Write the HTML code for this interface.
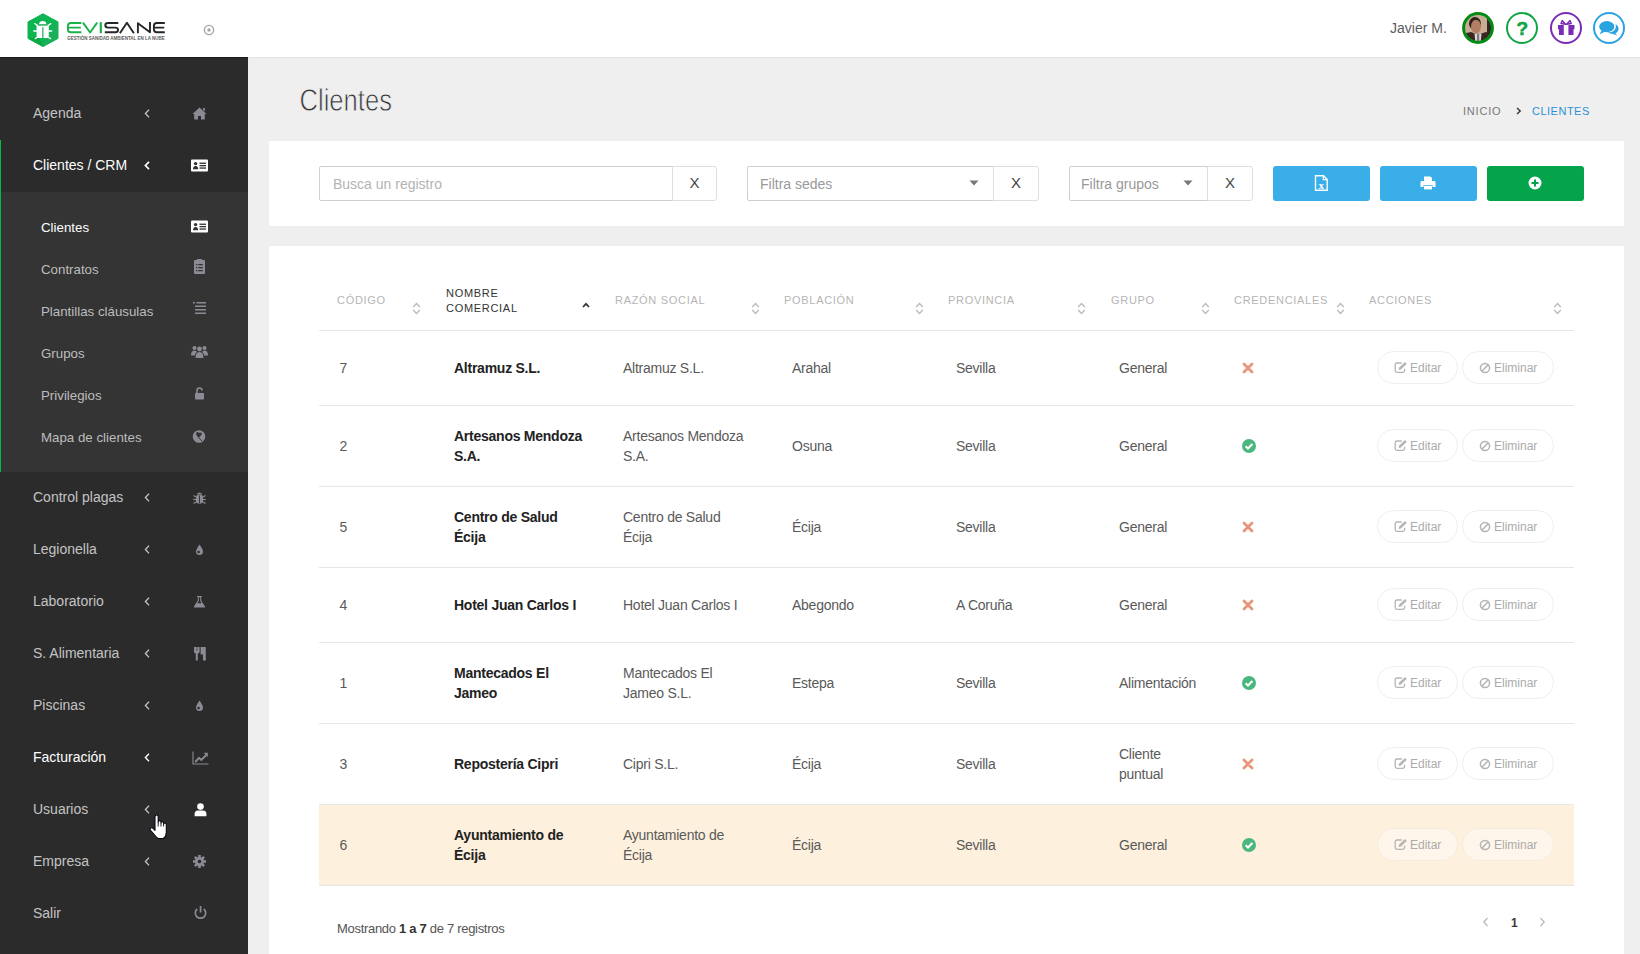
<!DOCTYPE html>
<html><head><meta charset="utf-8">
<style>
*{margin:0;padding:0;box-sizing:border-box}
html,body{width:1640px;height:954px;overflow:hidden;background:#efefef;font-family:"Liberation Sans",sans-serif}
.a{position:absolute}
#hdr{position:absolute;left:0;top:0;width:1640px;height:57px;background:#fff}
#side{position:absolute;left:0;top:57px;width:248px;height:897px;background:#2b2b2b}
.mi{position:absolute;left:0;width:248px;height:52px;color:#c4c4c4;font-size:14px}
.mi .t{position:absolute;left:33px;top:17px;line-height:16px;white-space:nowrap}
.mi .ch{position:absolute;left:144px;top:21px;width:6px;height:9px}
.mi .ic{position:absolute;left:191px;top:17px;width:17px;height:17px}
.si{position:absolute;left:0;width:248px;height:42px;color:#bdbdbd;font-size:13.3px}
.si .t{position:absolute;left:41px;top:13.6px;line-height:16px;white-space:nowrap}
.si .ic{position:absolute;left:191px;top:12px;width:17px;height:17px}
.th{position:absolute;font-size:11px;line-height:15px;letter-spacing:.7px;color:#b5b5b5;white-space:nowrap}
.td{position:absolute;font-size:14px;line-height:20px;letter-spacing:-.25px;color:#5a5a5a;white-space:nowrap}
.td.b{font-weight:bold;color:#222}
.btn{position:absolute;height:33px;border:1px solid #efefef;border-radius:17px;font-size:12px;line-height:14px;color:#ababab;white-space:nowrap}
</style></head><body>
<div id="hdr">
  <!-- logo -->
  <svg class="a" style="left:27px;top:13px" width="32" height="34" viewBox="0 0 32 34">
    <polygon points="16,0.8 31,8.9 31,25.4 16,33.6 1,25.4 1,8.9" fill="#0db552" stroke="#0db552" stroke-width="1" stroke-linejoin="round"/>
    <polygon points="31,8.9 31,25.4 16,33.6 18,20" fill="#21ad5c" opacity=".7"/>
    <polygon points="1,25.4 16,33.6 12,24" fill="#069a3a" opacity=".5"/>
    <g fill="#fff">
      <path d="M12.1 11.3 Q12.3 8 15.7 8 Q19.1 8 19.3 11.3 Z"/>
      <path d="M9.6 11.8 H21.8 V23 Q21.8 25 19.8 25 H11.6 Q9.6 25 9.6 23Z"/>
    </g>
    <g stroke="#fff" stroke-width="1.3" stroke-linecap="round">
      <path d="M10.3 12.5 L7.8 10.6"/><path d="M21.1 12.5 L23.8 10.6"/>
      <path d="M9.6 18 H6.8"/><path d="M21.8 18 H24.7"/>
      <path d="M10.3 24.2 L8.2 25.6"/><path d="M21.1 24.2 L23.6 25.6"/>
    </g>
    <rect x="15.3" y="14.2" width="1.1" height="10.8" fill="#0ea24c"/>
    <rect x="11" y="11.6" width="9.5" height="1" fill="#0a9a3e"/>
  </svg>
  <svg class="a" style="left:64px;top:18px" width="106" height="26" viewBox="0 0 106 26">
    <g fill="none" stroke-width="1.9" stroke-linejoin="round">
      <path d="M17.4 5.05 H6.8 Q3.9 5.05 3.9 8 V11.3 Q3.9 14.25 6.8 14.25 H17.4 M3.9 9.65 H16.8" stroke="#1bb04a"/>
      <path d="M19 4.6 L26.1 14.5 L33.2 4.6" stroke="#1bb04a"/>
      <path d="M36.8 4.1 V15.2" stroke="#1bb04a" stroke-width="2.2"/>
      <path d="M54.3 5.05 H44.2 Q41.3 5.05 41.3 7.35 Q41.3 9.65 44.2 9.65 H51.2 Q54 9.65 54 11.95 Q54 14.25 51.2 14.25 H40.8" stroke="#262626"/>
      <path d="M55.9 15.2 L62.9 4.8 L69.9 15.2" stroke="#262626"/>
      <path d="M73.9 15.2 V5.2 L86 14.2 V4.1" stroke="#262626"/>
      <path d="M100.8 5.05 H92.8 Q89.9 5.05 89.9 8 V11.3 Q89.9 14.25 92.8 14.25 H100.8 M89.9 9.65 H100.2" stroke="#262626"/>
    </g>
    <text x="3.2" y="21.8" textLength="97.6" lengthAdjust="spacingAndGlyphs" font-family="Liberation Sans" font-weight="bold" font-size="4.7" fill="#5a5a5a">GESTIÓN SANIDAD AMBIENTAL EN LA NUBE</text>
  </svg>
  <svg class="a" style="left:202.6px;top:23.6px" width="12" height="12" viewBox="0 0 12 12"><circle cx="6" cy="6" r="4.6" fill="none" stroke="#a4a4ac" stroke-width="1.4"/><circle cx="6" cy="6" r="1.7" fill="#a4a4ac"/></svg>
  <div class="a" style="left:1390px;top:20px;font-size:14px;line-height:17px;color:#5c5c5c;white-space:nowrap">Javier M.</div>
  <svg class="a" style="left:1462px;top:12px" width="32" height="32" viewBox="0 0 32 32">
    <defs><clipPath id="av"><circle cx="16" cy="16" r="13.2"/></clipPath></defs>
    <g clip-path="url(#av)">
      <rect width="32" height="32" fill="#c8ad93"/>
      <rect x="25" y="7" width="4" height="16" fill="#2f2624"/>
      <ellipse cx="13" cy="11.5" rx="6" ry="6.5" fill="#2d1f1a"/>
      <ellipse cx="14" cy="14.5" rx="5" ry="6.8" fill="#b27d64"/>
      <path d="M0 22 L9 20 L12.5 21.5 L19.5 21.5 L24 20 L32 22 V32 H0Z" fill="#3b2520"/>
      <path d="M12.5 21.5 H19.5 L18.5 32 H13.5Z" fill="#ddd6cb"/>
      <rect x="15" y="22" width="2.2" height="10" fill="#7a7890"/>
    </g>
    <circle cx="16" cy="16" r="14.4" fill="none" stroke="#038a14" stroke-width="3"/>
  </svg>
  <svg class="a" style="left:1505px;top:11px" width="34" height="34" viewBox="0 0 34 34">
    <circle cx="17" cy="17" r="15" fill="none" stroke="#12a544" stroke-width="2"/>
    <text x="17.3" y="24" text-anchor="middle" font-family="Liberation Sans" font-weight="bold" font-size="19" fill="#12a544" stroke="#12a544" stroke-width=".6">?</text>
  </svg>
  <svg class="a" style="left:1549px;top:11px" width="34" height="34" viewBox="0 0 34 34">
    <circle cx="17" cy="17" r="15" fill="none" stroke="#7a2db4" stroke-width="2"/>
    <path d="M9 14 H25.5 V18.2 H24.5 V24 H10 V18.2 H9Z" fill="#7a2db4"/>
    <rect x="14.8" y="14" width="4.6" height="10" fill="#fff"/>
    <rect x="15.6" y="14" width="3" height="10" fill="#7a2db4" opacity="0"/>
    <path d="M16.6 13.2 L13.2 9.6 L12 12.6Z M17.6 13.2 L21 9.6 L22.2 12.6Z" fill="none" stroke="#7a2db4" stroke-width="1.5" stroke-linejoin="round"/>
  </svg>
  <svg class="a" style="left:1592px;top:11px" width="34" height="34" viewBox="0 0 34 34">
    <circle cx="17" cy="17" r="15" fill="none" stroke="#2ba3e0" stroke-width="2"/>
    <ellipse cx="14.8" cy="15.6" rx="7.6" ry="5.6" fill="#2ba3e0"/>
    <path d="M9.5 19.5 L7.6 23.2 L13.5 20.5Z" fill="#2ba3e0"/>
    <path d="M23.6 13 Q27.6 15.6 26.3 19.6 Q25.5 21.5 23.3 22.3 L25.3 24.6 L20 22.8 Q17.3 22.6 15.6 21.6 Q21 21.4 23 18.6 Q24.6 16.2 23.6 13Z" fill="#2ba3e0"/>
  </svg>
  <div class="a" style="left:249px;top:57px;width:1391px;height:1px;background:#e4e4e4"></div>
</div>
<div id="side">
  <div class="a" style="left:0;top:0;width:248px;height:1px;background:#1c1c1c"></div>
  <!-- main menu -->
  <div class="mi" style="top:31px"><span class="t">Agenda</span>
    <svg class="ch" viewBox="0 0 6 9"><path d="M5 .8 L1.4 4.5 L5 8.2" fill="none" stroke="#c4c4c4" stroke-width="1.25"/></svg>
    <svg class="ic" viewBox="0 0 17 17"><path d="M8.5 2.5 L1.5 9 L3.2 9 L3.2 14.5 L7 14.5 L7 11 L10 11 L10 14.5 L13.8 14.5 L13.8 9 L15.5 9Z M12 3 H13.8 V6.5 L12 5Z" fill="#8b8b93"/></svg>
  </div>
  <div class="mi" style="top:83px;color:#fff"><span class="t">Clientes / CRM</span>
    <svg class="ch" viewBox="0 0 6 9"><path d="M5 .8 L1.4 4.5 L5 8.2" fill="none" stroke="#fff" stroke-width="1.7"/></svg>
    <svg class="ic" viewBox="0 0 17 17"><rect x="0" y="2.5" width="17" height="12" rx="1" fill="#fff"/><circle cx="4.6" cy="6.6" r="1.7" fill="#2b2b2b"/><path d="M2 12.3 Q2.2 9 4.6 9 Q7 9 7.2 12.3Z" fill="#2b2b2b"/><rect x="8.5" y="5.6" width="6.5" height="1.3" fill="#2b2b2b"/><rect x="8.5" y="8" width="6.5" height="1.3" fill="#2b2b2b"/><rect x="8.5" y="10.4" width="6.5" height="1.3" fill="#2b2b2b"/></svg>
  </div>
  <div class="a" style="left:0;top:83px;width:1px;height:332px;background:#02b94a"></div>
  <!-- submenu -->
  <div class="a" style="left:1px;top:135px;width:247px;height:280px;background:#343434"></div>
  <div class="si" style="top:149px;color:#fff"><span class="t">Clientes</span>
    <svg class="ic" viewBox="0 0 17 17"><rect x="0" y="2.5" width="17" height="12" rx="1" fill="#fff"/><circle cx="4.6" cy="6.6" r="1.7" fill="#343434"/><path d="M2 12.3 Q2.2 9 4.6 9 Q7 9 7.2 12.3Z" fill="#343434"/><rect x="8.5" y="5.6" width="6.5" height="1.3" fill="#343434"/><rect x="8.5" y="8" width="6.5" height="1.3" fill="#343434"/><rect x="8.5" y="10.4" width="6.5" height="1.3" fill="#343434"/></svg>
  </div>
  <div class="si" style="top:191px"><span class="t">Contratos</span>
    <svg class="ic" style="top:9.5px" viewBox="0 0 17 17"><rect x="3" y="2" width="11" height="14" rx="1" fill="#8b8b93"/><rect x="6" y="1" width="5" height="2.5" fill="#8b8b93"/><rect x="5" y="6" width="1.3" height="1.3" fill="#343434"/><rect x="7.3" y="6" width="4.5" height="1.3" fill="#343434"/><rect x="5" y="9" width="1.3" height="1.3" fill="#343434"/><rect x="7.3" y="9" width="4.5" height="1.3" fill="#343434"/><rect x="5" y="12" width="1.3" height="1.3" fill="#343434"/><rect x="7.3" y="12" width="4.5" height="1.3" fill="#343434"/></svg>
  </div>
  <div class="si" style="top:233px"><span class="t">Plantillas cláusulas</span>
    <svg class="ic" style="top:10px" viewBox="0 0 17 17"><g fill="#8b8b93"><rect x="2" y="2" width="2" height="1.5"/><rect x="5.5" y="2" width="9.5" height="1.5"/><rect x="4" y="5.5" width="11" height="1.5"/><rect x="4" y="9" width="11" height="1.5"/><rect x="4" y="12.5" width="11" height="1.5"/></g></svg>
  </div>
  <div class="si" style="top:275px"><span class="t">Grupos</span>
    <svg class="ic" style="top:11px" viewBox="0 0 17 17"><g fill="#8b8b93"><circle cx="8.5" cy="6" r="2.4"/><circle cx="3.5" cy="5" r="2"/><circle cx="13.5" cy="5" r="2"/><path d="M4.5 15 Q4.5 9 8.5 9 Q12.5 9 12.5 15Z"/><path d="M0 12.5 Q0 7.5 3.5 7.5 Q5.5 7.5 6 9 Q4 10 3.8 12.5Z"/><path d="M17 12.5 Q17 7.5 13.5 7.5 Q11.5 7.5 11 9 Q13 10 13.2 12.5Z"/></g></svg>
  </div>
  <div class="si" style="top:317px"><span class="t">Privilegios</span>
    <svg class="ic" style="top:10.5px;left:189.5px" viewBox="0 0 17 17"><g fill="#8b8b93"><rect x="5" y="8" width="9" height="6.5" rx=".8"/></g><path d="M7 8 V5.5 Q7 3 9.5 3 Q12 3 12 5.5" fill="none" stroke="#8b8b93" stroke-width="1.6"/></svg>
  </div>
  <div class="si" style="top:359px"><span class="t">Mapa de clientes</span>
    <svg class="ic" style="left:190px" viewBox="0 0 17 17"><circle cx="9" cy="8.5" r="6.3" fill="#8b8b93"/><path d="M6.5 4.3 Q8 3.6 9 5 Q10.5 3.8 11.8 5 Q12.2 7 9.3 9.2 Q8.6 9.8 8 9.6 Q7.5 8 6.5 7.5 Q6 6 6.5 4.3Z" fill="#343434"/><path d="M8.6 9.8 L12.2 13.2" stroke="#343434" stroke-width="1"/></svg>
  </div>
  <!-- rest -->
  <div class="mi" style="top:415px"><span class="t">Control plagas</span>
    <svg class="ch" viewBox="0 0 6 9"><path d="M5 .8 L1.4 4.5 L5 8.2" fill="none" stroke="#c4c4c4" stroke-width="1.25"/></svg>
    <svg class="ic" viewBox="0 0 17 17"><g fill="#8b8b93"><path d="M5.5 5.5 Q8.5 1.5 11.5 5.5Z"/><rect x="5" y="6" width="7" height="8.5" rx="2"/><g stroke="#8b8b93" stroke-width="1.2"><path d="M5 8 L2.5 6.5"/><path d="M12 8 L14.5 6.5"/><path d="M5 10.5 H2.2"/><path d="M12 10.5 H14.8"/><path d="M5 13 L2.5 14.5"/><path d="M12 13 L14.5 14.5"/></g></g><rect x="8.1" y="6.5" width=".9" height="7.5" fill="#2b2b2b"/></svg>
  </div>
  <div class="mi" style="top:467px"><span class="t">Legionella</span>
    <svg class="ch" viewBox="0 0 6 9"><path d="M5 .8 L1.4 4.5 L5 8.2" fill="none" stroke="#c4c4c4" stroke-width="1.25"/></svg>
    <svg class="ic" viewBox="0 0 17 17"><path d="M8.5 3.5 Q12 8.5 12 10.5 Q12 14 8.5 14 Q5 14 5 10.5 Q5 8.5 8.5 3.5Z" fill="#8b8b93"/><circle cx="7.6" cy="11" r="1.3" fill="#2b2b2b"/></svg>
  </div>
  <div class="mi" style="top:519px"><span class="t">Laboratorio</span>
    <svg class="ch" viewBox="0 0 6 9"><path d="M5 .8 L1.4 4.5 L5 8.2" fill="none" stroke="#c4c4c4" stroke-width="1.25"/></svg>
    <svg class="ic" viewBox="0 0 17 17"><path d="M6 3 H11 V4 H10.2 V7.5 L14 13.5 V14.5 H3 V13.5 L6.8 7.5 V4 H6Z" fill="#8b8b93"/><path d="M7.8 4.2 H9.2 V8 L10.6 10.3 H6.4 L7.8 8Z" fill="#2b2b2b"/></svg>
  </div>
  <div class="mi" style="top:571px"><span class="t">S. Alimentaria</span>
    <svg class="ch" viewBox="0 0 6 9"><path d="M5 .8 L1.4 4.5 L5 8.2" fill="none" stroke="#c4c4c4" stroke-width="1.25"/></svg>
    <svg class="ic" viewBox="0 0 17 17"><g fill="#8b8b93"><path d="M3 2 H8.6 V6.5 Q8.6 8.3 6.8 8.5 V15.5 H4.8 V8.5 Q3 8.3 3 6.5Z"/><path d="M9.6 2 H14.8 V15.5 H12 V9.5 H9.6Z"/></g><rect x="5.4" y="2" width="1" height="4" fill="#2b2b2b" opacity=".6"/></svg>
  </div>
  <div class="mi" style="top:623px"><span class="t">Piscinas</span>
    <svg class="ch" viewBox="0 0 6 9"><path d="M5 .8 L1.4 4.5 L5 8.2" fill="none" stroke="#c4c4c4" stroke-width="1.25"/></svg>
    <svg class="ic" viewBox="0 0 17 17"><path d="M8.5 3.5 Q12 8.5 12 10.5 Q12 14 8.5 14 Q5 14 5 10.5 Q5 8.5 8.5 3.5Z" fill="#8b8b93"/><circle cx="7.6" cy="11" r="1.3" fill="#2b2b2b"/></svg>
  </div>
  <div class="mi" style="top:675px;color:#fff"><span class="t">Facturación</span>
    <svg class="ch" viewBox="0 0 6 9"><path d="M5 .8 L1.4 4.5 L5 8.2" fill="none" stroke="#fff" stroke-width="1.35"/></svg>
    <svg class="ic" style="left:192px" viewBox="0 0 17 17"><path d="M1 2.5 V15 H16.5" fill="none" stroke="#8b8b93" stroke-width="1.1"/><path d="M3.2 13 L7 8.8 L9.3 11 L14.3 6" fill="none" stroke="#8b8b93" stroke-width="1.9"/><path d="M11.6 3.8 H15.8 V8Z" fill="#8b8b93"/></svg>
  </div>
  <div class="mi" style="top:727px"><span class="t">Usuarios</span>
    <svg class="ch" viewBox="0 0 6 9"><path d="M5 .8 L1.4 4.5 L5 8.2" fill="none" stroke="#c4c4c4" stroke-width="1.25"/></svg>
    <svg class="ic" style="left:191.5px" viewBox="0 0 17 17"><g fill="#fff"><circle cx="8.5" cy="5.6" r="3.3"/><path d="M2.6 15.2 V13.2 Q2.6 9.6 6 9.6 H11 Q14.4 9.6 14.4 13.2 V15.2Z"/></g></svg>
  </div>
  <div class="mi" style="top:779px"><span class="t">Empresa</span>
    <svg class="ch" viewBox="0 0 6 9"><path d="M5 .8 L1.4 4.5 L5 8.2" fill="none" stroke="#c4c4c4" stroke-width="1.25"/></svg>
    <svg class="ic" viewBox="0 0 17 17"><g transform="translate(8.5 8.5)"><circle r="4.6" fill="#8b8b93"/><g fill="#8b8b93"><rect x="-1.3" y="-6.5" width="2.6" height="13"/><rect x="-1.3" y="-6.5" width="2.6" height="13" transform="rotate(45)"/><rect x="-1.3" y="-6.5" width="2.6" height="13" transform="rotate(90)"/><rect x="-1.3" y="-6.5" width="2.6" height="13" transform="rotate(135)"/></g><circle r="1.8" fill="#2b2b2b"/></g></svg>
  </div>
  <div class="mi" style="top:831px"><span class="t">Salir</span>
    <svg class="ic" style="top:16px;left:191.5px" viewBox="0 0 17 17"><path d="M5.2 5 A5.2 5.2 0 1 0 11.8 5" fill="none" stroke="#8b8b93" stroke-width="1.7"/><rect x="7.7" y="2" width="1.7" height="6.5" fill="#8b8b93"/></svg>
  </div>
  <!-- cursor -->
  <svg class="a" style="left:148.5px;top:757px" width="20" height="26" viewBox="0 0 20 26">
    <path d="M6 2.8 Q6 1 7.6 1 Q9.2 1 9.2 2.8 V8 Q9.2 6.6 10.6 6.6 Q12 6.6 12 8.2 V9 Q12 7.8 13.3 7.8 Q14.6 7.8 14.6 9.3 V10 Q14.6 9 15.9 9 Q17.3 9 17.3 10.6 V18.5 Q17.3 22.5 14.3 24.5 H9.2 Q7.6 23.5 6 21.5 L1.3 16 Q0.6 14.4 1.9 13.9 Q3.1 13.4 4.6 14.9 L6 16.3 Z" fill="#fff" stroke="#0a0410" stroke-width="1.1" stroke-linejoin="round"/>
    <path d="M9.2 8 V12.5 M12 9 V12.5 M14.6 10 V12.5" stroke="#0a0410" stroke-width=".9"/>
  </svg>
</div>
<div id="main">
  <svg class="a" style="left:298px;top:82px" width="100" height="34" viewBox="0 0 100 34"><text x="1.5" y="28.9" textLength="92.5" lengthAdjust="spacingAndGlyphs" font-family="Liberation Sans" font-size="31.3" fill="#333" stroke="#efefef" stroke-width=".8" paint-order="fill">Clientes</text></svg>
  <div class="a" style="left:1463px;top:105px;font-size:11px;line-height:13px;color:#777;letter-spacing:.8px;white-space:nowrap">INICIO</div>
  <svg class="a" style="left:1515px;top:105.5px" width="8" height="10" viewBox="0 0 8 10"><path d="M2 2 L5.2 5 L2 8" fill="none" stroke="#3a3a3a" stroke-width="1.5"/></svg>
  <div class="a" style="left:1532px;top:104.5px;font-size:11px;line-height:13px;color:#2b8fd6;letter-spacing:.5px;white-space:nowrap">CLIENTES</div>

  <!-- card 1 -->
  <div class="a" style="left:269px;top:141px;width:1355px;height:85px;background:#fff"></div>
  <div class="a inp" style="left:319px;top:166px;width:354px;height:35px;border:1px solid #cfcfcf;border-radius:2px 0 0 2px"></div>
  <div class="a" style="left:333px;top:176px;font-size:14px;line-height:16px;color:#b3b3b3;white-space:nowrap">Busca un registro</div>
  <div class="a" style="left:672px;top:166px;width:45px;height:35px;border:1px solid #dedede;border-radius:0 3px 3px 0;font-size:15px;line-height:31px;text-align:center;color:#444">X</div>

  <div class="a" style="left:747px;top:166px;width:247px;height:35px;border:1px solid #cfcfcf;border-radius:2px 0 0 2px"></div>
  <div class="a" style="left:760px;top:176px;font-size:14px;line-height:16px;color:#999;white-space:nowrap">Filtra sedes</div>
  <svg class="a" style="left:969px;top:180px" width="10" height="6" viewBox="0 0 10 6"><path d="M0.5 0.5 H9.5 L5 5.5Z" fill="#777"/></svg>
  <div class="a" style="left:993px;top:166px;width:46px;height:35px;border:1px solid #dedede;border-radius:0 3px 3px 0;font-size:15px;line-height:31px;text-align:center;color:#444">X</div>

  <div class="a" style="left:1069px;top:166px;width:139px;height:35px;border:1px solid #cfcfcf;border-radius:2px 0 0 2px"></div>
  <div class="a" style="left:1081px;top:176px;font-size:14px;line-height:16px;color:#999;white-space:nowrap">Filtra grupos</div>
  <svg class="a" style="left:1183px;top:180px" width="10" height="6" viewBox="0 0 10 6"><path d="M0.5 0.5 H9.5 L5 5.5Z" fill="#777"/></svg>
  <div class="a" style="left:1207px;top:166px;width:46px;height:35px;border:1px solid #dedede;border-radius:0 3px 3px 0;font-size:15px;line-height:31px;text-align:center;color:#444">X</div>

  <div class="a" style="left:1273px;top:166px;width:97px;height:35px;background:#3aaee8;border-radius:3px"></div>
  <svg class="a" style="left:1314px;top:175px" width="15" height="16" viewBox="0 0 15 16"><path d="M1.5 .8 H9.5 L13.2 4.5 V15.2 H1.5Z" fill="none" stroke="#fff" stroke-width="1.4"/><path d="M9.3 .8 V4.7 H13.2" fill="none" stroke="#fff" stroke-width="1.2"/><text x="7.3" y="13.6" text-anchor="middle" font-family="Liberation Serif" font-weight="bold" font-size="11" fill="#fff">x</text></svg>
  <div class="a" style="left:1380px;top:166px;width:97px;height:35px;background:#3aaee8;border-radius:3px"></div>
  <svg class="a" style="left:1420px;top:176px" width="16" height="14" viewBox="0 0 16 14"><path d="M4 .5 H10.5 L12 2 V5 H4Z" fill="#fff"/><path d="M1.5 5 H14.5 Q15.5 5 15.5 6.2 V11 H12.5 V9 H3.5 V11 H.5 V6.2 Q.5 5 1.5 5Z" fill="#fff"/><rect x="4" y="9.8" width="8" height="3.6" fill="#fff"/></svg>
  <div class="a" style="left:1487px;top:166px;width:97px;height:35px;background:#03a44a;border-radius:3px"></div>
  <svg class="a" style="left:1528px;top:176px" width="14" height="14" viewBox="0 0 14 14"><circle cx="7" cy="7" r="6.5" fill="#fff"/><rect x="3.5" y="6" width="7" height="2" fill="#03a44a"/><rect x="6" y="3.5" width="2" height="7" fill="#03a44a"/></svg>

  <!-- card 2 -->
  <div class="a" style="left:269px;top:246px;width:1355px;height:708px;background:#fff"></div>
<!--TABLE-->
<div class="th" style="left:337px;top:293px">CÓDIGO</div>
<svg class="a" style="left:412px;top:302px" width="9" height="13" viewBox="0 0 9 13"><path d="M1.2 5 L4.5 1.6 L7.8 5 M1.2 8 L4.5 11.4 L7.8 8" fill="none" stroke="#bbb" stroke-width="1.4"/></svg>
<div class="th" style="left:446px;top:286px;color:#333">NOMBRE<br>COMERCIAL</div>
<svg class="a" style="left:582px;top:302px" width="8" height="6" viewBox="0 0 8 6"><path d="M1 5 L4 1.8 L7 5" fill="none" stroke="#333" stroke-width="1.7"/></svg>
<div class="th" style="left:615px;top:293px">RAZÓN SOCIAL</div>
<svg class="a" style="left:751px;top:302px" width="9" height="13" viewBox="0 0 9 13"><path d="M1.2 5 L4.5 1.6 L7.8 5 M1.2 8 L4.5 11.4 L7.8 8" fill="none" stroke="#bbb" stroke-width="1.4"/></svg>
<div class="th" style="left:784px;top:293px">POBLACIÓN</div>
<svg class="a" style="left:915px;top:302px" width="9" height="13" viewBox="0 0 9 13"><path d="M1.2 5 L4.5 1.6 L7.8 5 M1.2 8 L4.5 11.4 L7.8 8" fill="none" stroke="#bbb" stroke-width="1.4"/></svg>
<div class="th" style="left:948px;top:293px">PROVINCIA</div>
<svg class="a" style="left:1077px;top:302px" width="9" height="13" viewBox="0 0 9 13"><path d="M1.2 5 L4.5 1.6 L7.8 5 M1.2 8 L4.5 11.4 L7.8 8" fill="none" stroke="#bbb" stroke-width="1.4"/></svg>
<div class="th" style="left:1111px;top:293px">GRUPO</div>
<svg class="a" style="left:1201px;top:302px" width="9" height="13" viewBox="0 0 9 13"><path d="M1.2 5 L4.5 1.6 L7.8 5 M1.2 8 L4.5 11.4 L7.8 8" fill="none" stroke="#bbb" stroke-width="1.4"/></svg>
<div class="th" style="left:1234px;top:293px">CREDENCIALES</div>
<svg class="a" style="left:1336px;top:302px" width="9" height="13" viewBox="0 0 9 13"><path d="M1.2 5 L4.5 1.6 L7.8 5 M1.2 8 L4.5 11.4 L7.8 8" fill="none" stroke="#bbb" stroke-width="1.4"/></svg>
<div class="th" style="left:1369px;top:293px">ACCIONES</div>
<svg class="a" style="left:1553px;top:302px" width="9" height="13" viewBox="0 0 9 13"><path d="M1.2 5 L4.5 1.6 L7.8 5 M1.2 8 L4.5 11.4 L7.8 8" fill="none" stroke="#bbb" stroke-width="1.4"/></svg>
<div class="a" style="left:319px;top:330px;width:1255px;height:1px;background:#e6e6e6"></div>
<div class="a" style="left:319px;top:405px;width:1255px;height:1px;background:#e6e6e6"></div>
<div class="a" style="left:319px;top:486px;width:1255px;height:1px;background:#e6e6e6"></div>
<div class="a" style="left:319px;top:567px;width:1255px;height:1px;background:#e6e6e6"></div>
<div class="a" style="left:319px;top:642px;width:1255px;height:1px;background:#e6e6e6"></div>
<div class="a" style="left:319px;top:723px;width:1255px;height:1px;background:#e6e6e6"></div>
<div class="a" style="left:319px;top:804px;width:1255px;height:1px;background:#e6e6e6"></div>
<div class="a" style="left:319px;top:885px;width:1255px;height:1px;background:#e6e6e6"></div>
<div class="td" style="left:339.5px;top:358.0px">7</div>
<div class="td b" style="left:454px;top:358.0px">Altramuz S.L.</div>
<div class="td" style="left:623px;top:358.0px">Altramuz S.L.</div>
<div class="td" style="left:792px;top:358.0px">Arahal</div>
<div class="td" style="left:956px;top:358.0px">Sevilla</div>
<div class="td" style="left:1119px;top:358.0px">General</div>
<svg class="a" style="left:1242px;top:361.5px" width="12" height="12" viewBox="0 0 12 12"><path d="M2 2 L10 10 M10 2 L2 10" stroke="#e8957a" stroke-width="2.8" stroke-linecap="round"/></svg>
<div class="btn" style="left:1377px;top:351.0px;width:81px;background:#fff;border-color:#efefef"><svg class="a" style="left:16px;top:9px" width="14" height="13" viewBox="0 0 14 13"><path d="M7.8 2 H3 Q1.2 2 1.2 3.8 V9.6 Q1.2 11.4 3 11.4 H8.8 Q10.6 11.4 10.6 9.6 V7.8" fill="none" stroke="#b5b5b5" stroke-width="1.3"/><path d="M4.6 9 L5.2 6.6 L10.4 1.4 Q11 .9 11.6 1.5 L12.3 2.2 Q12.8 2.8 12.3 3.3 L7 8.4Z" fill="#b5b5b5"/></svg><span class="a" style="left:32px;top:9px">Editar</span></div>
<div class="btn" style="left:1462px;top:351.0px;width:92px;background:#fff;border-color:#efefef"><svg class="a" style="left:16px;top:9.5px" width="12" height="12" viewBox="0 0 12 12"><circle cx="6" cy="6" r="4.6" fill="none" stroke="#b3b3b3" stroke-width="1.5"/><path d="M2.8 9.2 L9.2 2.8" stroke="#b3b3b3" stroke-width="1.5"/></svg><span class="a" style="left:31px;top:9px">Eliminar</span></div>
<div class="td" style="left:339.5px;top:436.0px">2</div>
<div class="td b" style="left:454px;top:426.0px">Artesanos Mendoza<br>S.A.</div>
<div class="td" style="left:623px;top:426.0px">Artesanos Mendoza<br>S.A.</div>
<div class="td" style="left:792px;top:436.0px">Osuna</div>
<div class="td" style="left:956px;top:436.0px">Sevilla</div>
<div class="td" style="left:1119px;top:436.0px">General</div>
<svg class="a" style="left:1241px;top:437.5px" width="16" height="16" viewBox="0 0 16 16"><circle cx="8" cy="8" r="7" fill="#4ab87e"/><path d="M4.6 8.2 L7 10.5 L11.4 6" fill="none" stroke="#fff" stroke-width="2"/></svg>
<div class="btn" style="left:1377px;top:429.0px;width:81px;background:#fff;border-color:#efefef"><svg class="a" style="left:16px;top:9px" width="14" height="13" viewBox="0 0 14 13"><path d="M7.8 2 H3 Q1.2 2 1.2 3.8 V9.6 Q1.2 11.4 3 11.4 H8.8 Q10.6 11.4 10.6 9.6 V7.8" fill="none" stroke="#b5b5b5" stroke-width="1.3"/><path d="M4.6 9 L5.2 6.6 L10.4 1.4 Q11 .9 11.6 1.5 L12.3 2.2 Q12.8 2.8 12.3 3.3 L7 8.4Z" fill="#b5b5b5"/></svg><span class="a" style="left:32px;top:9px">Editar</span></div>
<div class="btn" style="left:1462px;top:429.0px;width:92px;background:#fff;border-color:#efefef"><svg class="a" style="left:16px;top:9.5px" width="12" height="12" viewBox="0 0 12 12"><circle cx="6" cy="6" r="4.6" fill="none" stroke="#b3b3b3" stroke-width="1.5"/><path d="M2.8 9.2 L9.2 2.8" stroke="#b3b3b3" stroke-width="1.5"/></svg><span class="a" style="left:31px;top:9px">Eliminar</span></div>
<div class="td" style="left:339.5px;top:517.0px">5</div>
<div class="td b" style="left:454px;top:507.0px">Centro de Salud<br>Écija</div>
<div class="td" style="left:623px;top:507.0px">Centro de Salud<br>Écija</div>
<div class="td" style="left:792px;top:517.0px">Écija</div>
<div class="td" style="left:956px;top:517.0px">Sevilla</div>
<div class="td" style="left:1119px;top:517.0px">General</div>
<svg class="a" style="left:1242px;top:520.5px" width="12" height="12" viewBox="0 0 12 12"><path d="M2 2 L10 10 M10 2 L2 10" stroke="#e8957a" stroke-width="2.8" stroke-linecap="round"/></svg>
<div class="btn" style="left:1377px;top:510.0px;width:81px;background:#fff;border-color:#efefef"><svg class="a" style="left:16px;top:9px" width="14" height="13" viewBox="0 0 14 13"><path d="M7.8 2 H3 Q1.2 2 1.2 3.8 V9.6 Q1.2 11.4 3 11.4 H8.8 Q10.6 11.4 10.6 9.6 V7.8" fill="none" stroke="#b5b5b5" stroke-width="1.3"/><path d="M4.6 9 L5.2 6.6 L10.4 1.4 Q11 .9 11.6 1.5 L12.3 2.2 Q12.8 2.8 12.3 3.3 L7 8.4Z" fill="#b5b5b5"/></svg><span class="a" style="left:32px;top:9px">Editar</span></div>
<div class="btn" style="left:1462px;top:510.0px;width:92px;background:#fff;border-color:#efefef"><svg class="a" style="left:16px;top:9.5px" width="12" height="12" viewBox="0 0 12 12"><circle cx="6" cy="6" r="4.6" fill="none" stroke="#b3b3b3" stroke-width="1.5"/><path d="M2.8 9.2 L9.2 2.8" stroke="#b3b3b3" stroke-width="1.5"/></svg><span class="a" style="left:31px;top:9px">Eliminar</span></div>
<div class="td" style="left:339.5px;top:595.0px">4</div>
<div class="td b" style="left:454px;top:595.0px">Hotel Juan Carlos I</div>
<div class="td" style="left:623px;top:595.0px">Hotel Juan Carlos I</div>
<div class="td" style="left:792px;top:595.0px">Abegondo</div>
<div class="td" style="left:956px;top:595.0px">A Coruña</div>
<div class="td" style="left:1119px;top:595.0px">General</div>
<svg class="a" style="left:1242px;top:598.5px" width="12" height="12" viewBox="0 0 12 12"><path d="M2 2 L10 10 M10 2 L2 10" stroke="#e8957a" stroke-width="2.8" stroke-linecap="round"/></svg>
<div class="btn" style="left:1377px;top:588.0px;width:81px;background:#fff;border-color:#efefef"><svg class="a" style="left:16px;top:9px" width="14" height="13" viewBox="0 0 14 13"><path d="M7.8 2 H3 Q1.2 2 1.2 3.8 V9.6 Q1.2 11.4 3 11.4 H8.8 Q10.6 11.4 10.6 9.6 V7.8" fill="none" stroke="#b5b5b5" stroke-width="1.3"/><path d="M4.6 9 L5.2 6.6 L10.4 1.4 Q11 .9 11.6 1.5 L12.3 2.2 Q12.8 2.8 12.3 3.3 L7 8.4Z" fill="#b5b5b5"/></svg><span class="a" style="left:32px;top:9px">Editar</span></div>
<div class="btn" style="left:1462px;top:588.0px;width:92px;background:#fff;border-color:#efefef"><svg class="a" style="left:16px;top:9.5px" width="12" height="12" viewBox="0 0 12 12"><circle cx="6" cy="6" r="4.6" fill="none" stroke="#b3b3b3" stroke-width="1.5"/><path d="M2.8 9.2 L9.2 2.8" stroke="#b3b3b3" stroke-width="1.5"/></svg><span class="a" style="left:31px;top:9px">Eliminar</span></div>
<div class="td" style="left:339.5px;top:673.0px">1</div>
<div class="td b" style="left:454px;top:663.0px">Mantecados El<br>Jameo</div>
<div class="td" style="left:623px;top:663.0px">Mantecados El<br>Jameo S.L.</div>
<div class="td" style="left:792px;top:673.0px">Estepa</div>
<div class="td" style="left:956px;top:673.0px">Sevilla</div>
<div class="td" style="left:1119px;top:673.0px">Alimentación</div>
<svg class="a" style="left:1241px;top:674.5px" width="16" height="16" viewBox="0 0 16 16"><circle cx="8" cy="8" r="7" fill="#4ab87e"/><path d="M4.6 8.2 L7 10.5 L11.4 6" fill="none" stroke="#fff" stroke-width="2"/></svg>
<div class="btn" style="left:1377px;top:666.0px;width:81px;background:#fff;border-color:#efefef"><svg class="a" style="left:16px;top:9px" width="14" height="13" viewBox="0 0 14 13"><path d="M7.8 2 H3 Q1.2 2 1.2 3.8 V9.6 Q1.2 11.4 3 11.4 H8.8 Q10.6 11.4 10.6 9.6 V7.8" fill="none" stroke="#b5b5b5" stroke-width="1.3"/><path d="M4.6 9 L5.2 6.6 L10.4 1.4 Q11 .9 11.6 1.5 L12.3 2.2 Q12.8 2.8 12.3 3.3 L7 8.4Z" fill="#b5b5b5"/></svg><span class="a" style="left:32px;top:9px">Editar</span></div>
<div class="btn" style="left:1462px;top:666.0px;width:92px;background:#fff;border-color:#efefef"><svg class="a" style="left:16px;top:9.5px" width="12" height="12" viewBox="0 0 12 12"><circle cx="6" cy="6" r="4.6" fill="none" stroke="#b3b3b3" stroke-width="1.5"/><path d="M2.8 9.2 L9.2 2.8" stroke="#b3b3b3" stroke-width="1.5"/></svg><span class="a" style="left:31px;top:9px">Eliminar</span></div>
<div class="td" style="left:339.5px;top:754.0px">3</div>
<div class="td b" style="left:454px;top:754.0px">Repostería Cipri</div>
<div class="td" style="left:623px;top:754.0px">Cipri S.L.</div>
<div class="td" style="left:792px;top:754.0px">Écija</div>
<div class="td" style="left:956px;top:754.0px">Sevilla</div>
<div class="td" style="left:1119px;top:744.0px">Cliente<br>puntual</div>
<svg class="a" style="left:1242px;top:757.5px" width="12" height="12" viewBox="0 0 12 12"><path d="M2 2 L10 10 M10 2 L2 10" stroke="#e8957a" stroke-width="2.8" stroke-linecap="round"/></svg>
<div class="btn" style="left:1377px;top:747.0px;width:81px;background:#fff;border-color:#efefef"><svg class="a" style="left:16px;top:9px" width="14" height="13" viewBox="0 0 14 13"><path d="M7.8 2 H3 Q1.2 2 1.2 3.8 V9.6 Q1.2 11.4 3 11.4 H8.8 Q10.6 11.4 10.6 9.6 V7.8" fill="none" stroke="#b5b5b5" stroke-width="1.3"/><path d="M4.6 9 L5.2 6.6 L10.4 1.4 Q11 .9 11.6 1.5 L12.3 2.2 Q12.8 2.8 12.3 3.3 L7 8.4Z" fill="#b5b5b5"/></svg><span class="a" style="left:32px;top:9px">Editar</span></div>
<div class="btn" style="left:1462px;top:747.0px;width:92px;background:#fff;border-color:#efefef"><svg class="a" style="left:16px;top:9.5px" width="12" height="12" viewBox="0 0 12 12"><circle cx="6" cy="6" r="4.6" fill="none" stroke="#b3b3b3" stroke-width="1.5"/><path d="M2.8 9.2 L9.2 2.8" stroke="#b3b3b3" stroke-width="1.5"/></svg><span class="a" style="left:31px;top:9px">Eliminar</span></div>
<div class="a" style="left:319px;top:805px;width:1255px;height:80px;background:#fdf0dd"></div>
<div class="td" style="left:339.5px;top:835.0px">6</div>
<div class="td b" style="left:454px;top:825.0px">Ayuntamiento de<br>Écija</div>
<div class="td" style="left:623px;top:825.0px">Ayuntamiento de<br>Écija</div>
<div class="td" style="left:792px;top:835.0px">Écija</div>
<div class="td" style="left:956px;top:835.0px">Sevilla</div>
<div class="td" style="left:1119px;top:835.0px">General</div>
<svg class="a" style="left:1241px;top:836.5px" width="16" height="16" viewBox="0 0 16 16"><circle cx="8" cy="8" r="7" fill="#4ab87e"/><path d="M4.6 8.2 L7 10.5 L11.4 6" fill="none" stroke="#fff" stroke-width="2"/></svg>
<div class="btn" style="left:1377px;top:828.0px;width:81px;background:#fef6ea;border-color:#f6ecdd"><svg class="a" style="left:16px;top:9px" width="14" height="13" viewBox="0 0 14 13"><path d="M7.8 2 H3 Q1.2 2 1.2 3.8 V9.6 Q1.2 11.4 3 11.4 H8.8 Q10.6 11.4 10.6 9.6 V7.8" fill="none" stroke="#b5b5b5" stroke-width="1.3"/><path d="M4.6 9 L5.2 6.6 L10.4 1.4 Q11 .9 11.6 1.5 L12.3 2.2 Q12.8 2.8 12.3 3.3 L7 8.4Z" fill="#b5b5b5"/></svg><span class="a" style="left:32px;top:9px">Editar</span></div>
<div class="btn" style="left:1462px;top:828.0px;width:92px;background:#fef6ea;border-color:#f6ecdd"><svg class="a" style="left:16px;top:9.5px" width="12" height="12" viewBox="0 0 12 12"><circle cx="6" cy="6" r="4.6" fill="none" stroke="#b3b3b3" stroke-width="1.5"/><path d="M2.8 9.2 L9.2 2.8" stroke="#b3b3b3" stroke-width="1.5"/></svg><span class="a" style="left:31px;top:9px">Eliminar</span></div>
<div class="a" style="left:337px;top:921px;font-size:13px;line-height:15px;letter-spacing:-.3px;color:#555;white-space:nowrap">Mostrando <b style="color:#333">1 a 7</b> de 7 registros</div>
<svg class="a" style="left:1482px;top:917px" width="7" height="10" viewBox="0 0 7 10"><path d="M5.5 1 L1.8 5 L5.5 9" fill="none" stroke="#bbb" stroke-width="1.3"/></svg>
<div class="a" style="left:1511px;top:916px;font-size:12px;line-height:14px;font-weight:bold;color:#3a3a3a">1</div>
<svg class="a" style="left:1539px;top:917px" width="7" height="10" viewBox="0 0 7 10"><path d="M1.5 1 L5.2 5 L1.5 9" fill="none" stroke="#bbb" stroke-width="1.3"/></svg>
<!--/TABLE-->
</div>
</body></html>
